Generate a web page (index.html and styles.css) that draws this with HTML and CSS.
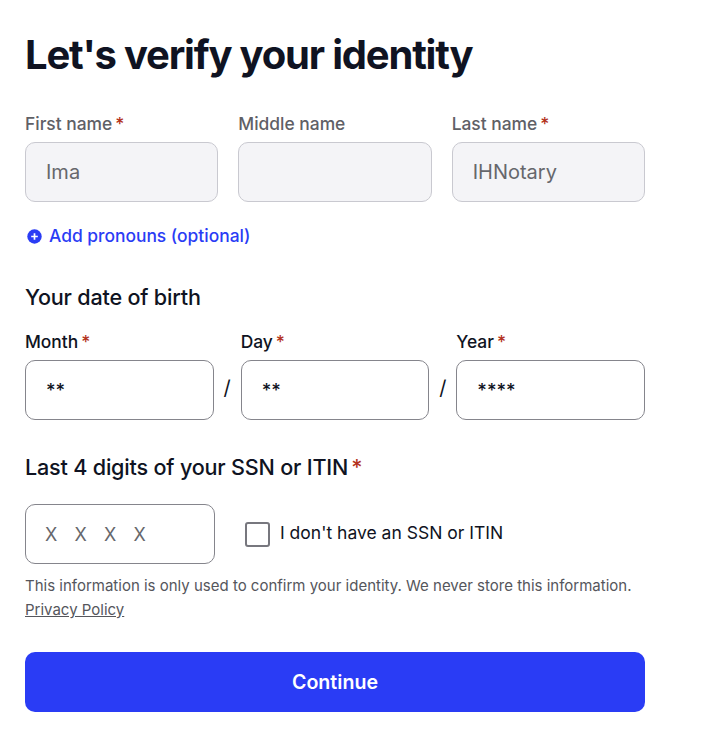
FILE: index.html
```html
<!DOCTYPE html>
<html lang="en">
<head>
<meta charset="utf-8">
<title>Let's verify your identity</title>
<link rel="stylesheet" href="styles.css">
</head>
<body>
<main class="form">
  <h1 class="title">Let's verify your identity</h1>
  <div class="name-row">
    <div class="field">
      <div class="label muted">First name<span class="req">*</span></div>
      <div class="box disabled">Ima</div>
    </div>
    <div class="field">
      <div class="label muted">Middle name</div>
      <div class="box disabled"></div>
    </div>
    <div class="field">
      <div class="label muted">Last name<span class="req">*</span></div>
      <div class="box disabled">IHNotary</div>
    </div>
  </div>
  <a class="add" href="#">
    <svg class="add-icon" width="15" height="15" viewBox="0 0 15 15"><circle cx="7.5" cy="7.5" r="7.2" fill="#2a3cf5"/><path d="M7.5 4.2v6.6M4.2 7.5h6.6" stroke="#fff" stroke-width="1.7"/></svg>
    Add pronouns (optional)
  </a>
  <h2 class="section dob-title">Your date of birth</h2>
  <div class="dob-row">
    <div class="field">
      <div class="label">Month<span class="req">*</span></div>
      <div class="box dob">**</div>
    </div>
    <div class="slash">/</div>
    <div class="field">
      <div class="label">Day<span class="req">*</span></div>
      <div class="box dob">**</div>
    </div>
    <div class="slash">/</div>
    <div class="field">
      <div class="label">Year<span class="req">*</span></div>
      <div class="box dob">****</div>
    </div>
  </div>
  <h2 class="section ssn-title">Last 4 digits of your SSN or ITIN<span class="req">*</span></h2>
  <div class="ssn-row">
    <div class="box ssn">X X X X</div>
    <label class="check"><span class="checkbox"></span><span class="check-text">I don't have an SSN or ITIN</span></label>
  </div>
  <p class="note">This information is only used to confirm your identity. We never store this information. <a href="#">Privacy Policy</a></p>
  <button class="continue" type="button">Continue</button>
</main>
</body>
</html>
```
FILE: styles.css
```css
* { box-sizing: border-box; }
html, body { margin: 0; background: #fff; }
body { font-family: Inter, "Liberation Sans", sans-serif; color: #0f1322; }
.form { width: 620px; margin-left: 25px; padding-top: 30px; }
.title { margin: 0; font-size: 40px; line-height: 50px; font-weight: 700; letter-spacing: -1.2px; }
.name-row { display: grid; grid-template-columns: repeat(3, 1fr); gap: 20px; margin-top: 31px; }
.field { flex: 1; min-width: 0; }
.label { font-size: 17.4px; line-height: 26px; font-weight: 500; margin-bottom: 5px; white-space: nowrap; }
.muted { color: #5f6066; }
.req { color: #b3321c; margin-left: 3px; }
.box { display: flex; align-items: center; height: 60px; border: 1px solid #85858c; border-radius: 10px; padding-left: 20px; font-size: 20px; background: #fff; }
.disabled { background: #f4f4f7; border-color: #c9c9d0; color: #66676c; }
.add { display: flex; align-items: center; gap: 7px; margin: 22px 0 0 2px; font-size: 17.4px; line-height: 24px; font-weight: 500; color: #2a3cf5; text-decoration: none; }
.section { margin: 0; font-size: 21.6px; line-height: 28px; font-weight: 500; letter-spacing: -0.2px; }
.dob-title { margin-top: 35px; }
.dob-row { display: flex; margin-top: 18px; }
.dob { padding-left: 20px; font-size: 18.4px; font-weight: 500; }
.slash { width: 27px; padding-top: 45px; text-align: center; font-size: 20px; line-height: 28px; font-weight: 400; }
.ssn-title { margin-top: 33px; }
.ssn-row { display: flex; align-items: center; margin-top: 23px; }
.ssn { width: 190px; flex: none; padding-left: 19px; word-spacing: 12.2px; font-size: 18px; color: #66676c; }
.check { display: flex; align-items: center; gap: 10px; margin-left: 30px; font-size: 17.5px; }
.check-text { line-height: 24px; padding-bottom: 2px; }
.checkbox { width: 25px; height: 25px; border: 2px solid #77777e; border-radius: 3px; }
.note { margin: 10px 0 0; font-size: 15px; line-height: 24px; color: #55565c; }
.note a { color: inherit; }
.continue { display: block; width: 100%; height: 60px; margin-top: 30px; border: 0; border-radius: 10px; background: #2a3cf5; color: #fff; font: 600 19.6px Inter, "Liberation Sans", sans-serif; }
```
